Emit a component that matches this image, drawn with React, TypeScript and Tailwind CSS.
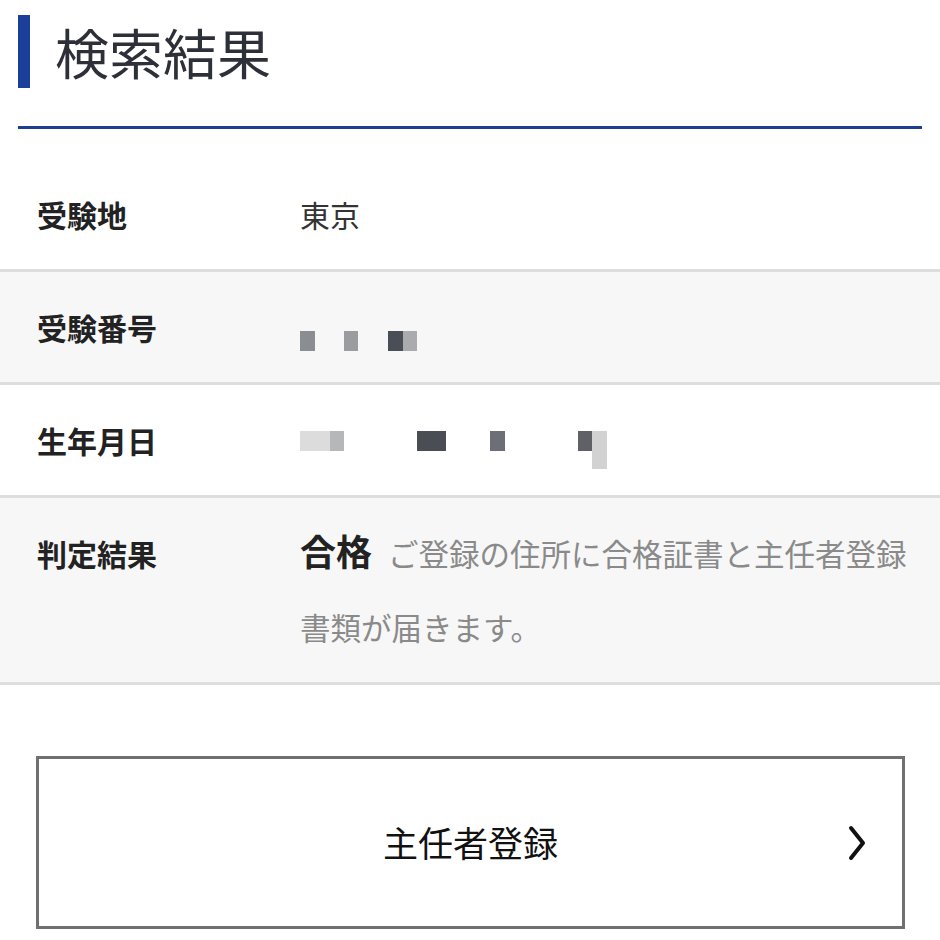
import React from 'react';

// 検索結果ページ
type Block = { w: number; h?: number; ml: number; color: string };

const numberBlocks: Block[] = [
  { w: 15, ml: 0, color: '#8a8d91' },
  { w: 14, ml: 29, color: '#9a9c9f' },
  { w: 15, ml: 30, color: '#4a4e57' },
  { w: 14, ml: 0, color: '#a9abad' },
];

const birthBlocks: Block[] = [
  { w: 30, ml: 0, color: '#dcdcdc' },
  { w: 14, ml: 0, color: '#b5b7ba' },
  { w: 29, ml: 73, color: '#4a4d54' },
  { w: 15, ml: 44, color: '#6c7076' },
  { w: 14, ml: 73, color: '#5f6166' },
  { w: 15, h: 38, ml: 0, color: '#d2d2d2' },
];

const Redacted: React.FC<{ blocks: Block[]; top: number }> = ({ blocks, top }) => (
  <div className="flex items-start" style={{ paddingTop: top }}>
    {blocks.map((b, i) => (
      <span
        key={i}
        className="block"
        style={{ width: b.w, height: b.h ?? 20, marginLeft: b.ml, backgroundColor: b.color }}
      />
    ))}
  </div>
);

const Row: React.FC<{ label: string; gray?: boolean; children: React.ReactNode }> = ({ label, gray, children }) => (
  <div className={`flex border-b-[3px] border-[#dedede] py-[18px] pl-[37px] pr-[20px] ${gray ? 'bg-[#f7f7f7]' : 'bg-white'}`}>
    <div className="w-[263px] shrink-0 text-[30px] font-bold leading-[74px] text-[#222]">{label}</div>
    <div className="min-h-[74px] flex-1">{children}</div>
  </div>
);

export default function App() {
  return (
    <div className="min-h-screen bg-white font-['Noto_Sans_CJK_JP',sans-serif]">
      {/* タイトル */}
      <div className="mx-[18px] border-b-[3px] border-[#1e3f8f] pt-[15px] pb-[38px]">
        <div className="flex items-center gap-[25px]">
          <span className="block h-[73px] w-[12px] bg-[#1a3e9a]" />
          <h1 className="text-[54px] font-normal leading-[73px] text-[#2d3038]">検索結果</h1>
        </div>
      </div>

      <div className="h-[30px]" />

      <Row label="受験地">
        <span className="text-[30px] leading-[74px] text-[#333]">東京</span>
      </Row>
      <Row label="受験番号" gray>
        <Redacted blocks={numberBlocks} top={41} />
      </Row>
      <Row label="生年月日">
        <Redacted blocks={birthBlocks} top={28} />
      </Row>
      <Row label="判定結果" gray>
        <p className="text-[30px] leading-[74px]">
          <span className="text-[36px] font-bold leading-none text-[#222]">合格</span>
          <span className="ml-[16px] text-[30.5px] leading-none text-[#8a8a8a]">ご登録の住所に合格証書と主任者登録書類が届きます。</span>
        </p>
      </Row>

      {/* ボタン */}
      <div className="px-[36px] pt-[71px]">
        <button className="relative flex h-[173px] w-[869px] items-center justify-center border-[3px] border-[#707070] bg-white">
          <span className="text-[35px] text-[#111]">主任者登録</span>
          <svg className="absolute right-[36px] top-1/2 -translate-y-1/2" width="18" height="36" viewBox="0 0 18 36">
            <path d="M3 3 L15 18 L3 33" fill="none" stroke="#111" strokeWidth="4" strokeLinecap="round" strokeLinejoin="round" />
          </svg>
        </button>
      </div>
    </div>
  );
}
